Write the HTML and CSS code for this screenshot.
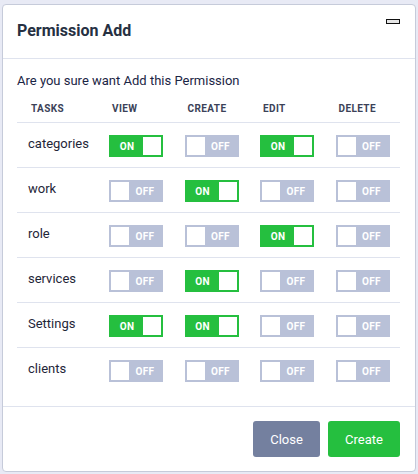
FILE: index.html
```html
<!DOCTYPE html>
<html>
<head>
<meta charset="utf-8">
<link rel="stylesheet" href="styles.css">
</head>
<body>
<div class="modal">
  <div class="modal-header">
    <h5 class="modal-title">Permission Add</h5>
    <span class="min-btn"></span>
  </div>
  <div class="modal-body">
    <p class="question">Are you sure want Add this Permission</p>
    <table class="perm-table">
      <colgroup>
        <col class="c-task"><col class="c-perm"><col class="c-perm"><col class="c-perm"><col class="c-perm">
      </colgroup>
      <thead>
        <tr><th>Tasks</th><th>View</th><th>Create</th><th>Edit</th><th>Delete</th></tr>
      </thead>
      <tbody>
        <tr><td class="task">categories</td>
          <td><span class="tg on"><span class="lbl">ON</span><span class="knob"></span></span></td>
          <td><span class="tg off"><span class="knob"></span><span class="lbl">OFF</span></span></td>
          <td><span class="tg on"><span class="lbl">ON</span><span class="knob"></span></span></td>
          <td><span class="tg off"><span class="knob"></span><span class="lbl">OFF</span></span></td></tr>
        <tr><td class="task">work</td>
          <td><span class="tg off"><span class="knob"></span><span class="lbl">OFF</span></span></td>
          <td><span class="tg on"><span class="lbl">ON</span><span class="knob"></span></span></td>
          <td><span class="tg off"><span class="knob"></span><span class="lbl">OFF</span></span></td>
          <td><span class="tg off"><span class="knob"></span><span class="lbl">OFF</span></span></td></tr>
        <tr><td class="task">role</td>
          <td><span class="tg off"><span class="knob"></span><span class="lbl">OFF</span></span></td>
          <td><span class="tg off"><span class="knob"></span><span class="lbl">OFF</span></span></td>
          <td><span class="tg on"><span class="lbl">ON</span><span class="knob"></span></span></td>
          <td><span class="tg off"><span class="knob"></span><span class="lbl">OFF</span></span></td></tr>
        <tr><td class="task">services</td>
          <td><span class="tg off"><span class="knob"></span><span class="lbl">OFF</span></span></td>
          <td><span class="tg on"><span class="lbl">ON</span><span class="knob"></span></span></td>
          <td><span class="tg off"><span class="knob"></span><span class="lbl">OFF</span></span></td>
          <td><span class="tg off"><span class="knob"></span><span class="lbl">OFF</span></span></td></tr>
        <tr><td class="task">Settings</td>
          <td><span class="tg on"><span class="lbl">ON</span><span class="knob"></span></span></td>
          <td><span class="tg on"><span class="lbl">ON</span><span class="knob"></span></span></td>
          <td><span class="tg off"><span class="knob"></span><span class="lbl">OFF</span></span></td>
          <td><span class="tg off"><span class="knob"></span><span class="lbl">OFF</span></span></td></tr>
        <tr><td class="task">clients</td>
          <td><span class="tg off"><span class="knob"></span><span class="lbl">OFF</span></span></td>
          <td><span class="tg off"><span class="knob"></span><span class="lbl">OFF</span></span></td>
          <td><span class="tg off"><span class="knob"></span><span class="lbl">OFF</span></span></td>
          <td><span class="tg off"><span class="knob"></span><span class="lbl">OFF</span></span></td></tr>
      </tbody>
    </table>
  </div>
  <div class="modal-footer">
    <button class="btn btn-close">Close</button>
    <button class="btn btn-create">Create</button>
  </div>
</div>
</body>
</html>
```
FILE: styles.css
```css
html, body {
  margin: 0;
  padding: 0;
  background: #e8eaf5;
  font-family: Roboto, "Liberation Sans", sans-serif;
}
body {
  padding: 4px 2px 0 2px;
}
.modal {
  width: 414px;
  height: 468px;
  box-sizing: border-box;
  background: #fff;
  border: 1px solid #c6cbda;
  border-radius: 4px;
  display: flex;
  flex-direction: column;
  overflow: hidden;
}
.modal-header {
  flex: none;
  height: 54px;
  box-sizing: border-box;
  border-bottom: 1px solid #dfe3ee;
  display: flex;
  align-items: flex-start;
  justify-content: space-between;
  padding: 0 14px;
}
.modal-title {
  margin: 0;
  margin-top: 15px;
  font-size: 16px;
  font-weight: 700;
  color: #263042;
  line-height: 22px;
}
.min-btn {
  display: block;
  width: 12px;
  height: 3px;
  margin-top: 14px;
  margin-right: 1px;
  border: 1px solid #111;
  background: #e6e6e6;
}
.modal-body {
  flex: 1;
  padding: 0 14px;
}
.question {
  margin: 13px 0 0 0;
  font-size: 13px;
  line-height: 18px;
  color: #1b2545;
}
.perm-table {
  width: 383px;
  border-collapse: collapse;
  table-layout: fixed;
  margin-top: 5px;
}
.c-task { width: 81px; }
.c-perm { width: 75.5px; }
.perm-table th {
  font-size: 10px;
  font-weight: 700;
  text-transform: uppercase;
  letter-spacing: 0.4px;
  color: #3b4258;
  text-align: left;
  height: 27px;
  padding: 0 0 0 14px;
  border-bottom: 1px solid #dfe3ee;
  white-space: nowrap;
}
.perm-table td {
  box-sizing: border-box;
  height: 45px;
  padding: 0 0 0 11px;
  border-bottom: 1px solid #dfe3ee;
  vertical-align: middle;
}
.perm-table tbody tr:last-child td {
  border-bottom: none;
}
.perm-table td.task {
  font-size: 13px;
  color: #1f2638;
  padding-bottom: 4px;
}
.tg {
  display: flex;
  width: 54px;
  height: 22px;
  box-sizing: border-box;
  padding: 2px;
  align-items: center;
  margin-top: 2px;
}
.tg .knob {
  width: 18px;
  height: 18px;
  background: #fff;
  flex: none;
}
.tg .lbl {
  flex: 1;
  text-align: center;
  font-size: 10px;
  font-weight: 700;
  color: #fff;
  letter-spacing: 0.3px;
}
.tg.on {
  background: #25bf3f;
}
.tg.off {
  background: #b9c1d8;
}
.modal-footer {
  flex: none;
  height: 65px;
  box-sizing: border-box;
  border-top: 1px solid #dfe3ee;
  display: flex;
  justify-content: flex-end;
  align-items: flex-start;
  padding: 14px 15px 0 0;
  gap: 8px;
}
.btn {
  height: 36px;
  border: none;
  border-radius: 3px;
  color: #fff;
  font-family: Roboto, "Liberation Sans", sans-serif;
  font-size: 13px;
  padding: 0;
}
.btn-close {
  width: 67px;
  background: #74809f;
}
.btn-create {
  width: 72px;
  background: #25bf3f;
}
```
